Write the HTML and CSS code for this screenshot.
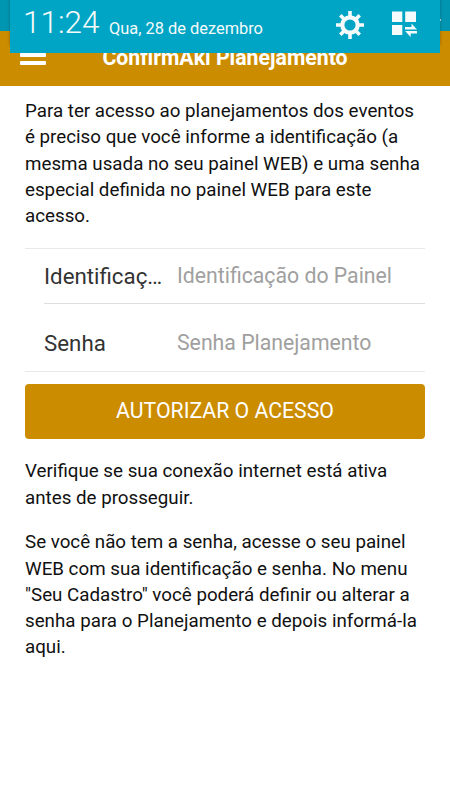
FILE: index.html
```
<!DOCTYPE html>
<html lang="pt-BR">
<head>
  <meta charset="UTF-8">
  <meta name="viewport" content="width=device-width, initial-scale=1.0">
  <title>ConfirmAki Planejamento</title>
  <link rel="stylesheet" href="styles.css">
</head>
<body>

  <div class="statusbar"><span class="status-dot"></span></div>

  <!-- Notification shade over the top of the app -->
  <div class="shade">
    <span class="clock">11:24</span>
    <span class="date">Qua, 28 de dezembro</span>
    <svg class="gear" viewBox="0 0 28 28" width="28" height="28">
      <circle cx="14" cy="14" r="7.7" fill="none" stroke="#f5fafb" stroke-width="4.2"/>
      <g stroke="#f5fafb" stroke-width="3.6">
        <path d="M14 0v5M14 23v5M0 14h5M23 14h5"/>
        <path d="M4.3 4.3l4 4M19.7 19.7l4 4M4.3 23.7l4-4M19.7 8.3l4-4"/>
      </g>
    </svg>
    <svg class="toggles" viewBox="0 0 26 26" width="26" height="26">
      <g fill="#f5fafb">
        <path d="M0 0.5h10.3v10.5H0zM13.2 0.5H24v10.5H13.2zM0 14h10.3v10H0z"/>
        <path d="M13 18.5h12L19.5 12.6v3.4H13zM25 20H13l5.7 6v-3.6H25z"/>
      </g>
    </svg>
  </div>

  <div class="navbar">
    <button class="menu" aria-label="Menu"><span></span><span></span><span></span></button>
    <h1 class="title">ConfirmAki Planejamento</h1>
  </div>

  <div class="content">
    <p>Para ter acesso ao planejamentos dos eventos é preciso que você informe a identificação (a mesma usada no seu painel WEB) e uma senha especial definida no painel WEB para este acesso.</p>

    <form class="login">
      <div class="fields">
        <div class="field">
          <label class="label" for="ident">Identificação</label>
          <input id="ident" type="text" placeholder="Identificação do Painel">
        </div>
        <div class="field">
          <label class="label" for="senha">Senha</label>
          <input id="senha" type="password" placeholder="Senha Planejamento">
        </div>
      </div>
      <button type="button" class="submit">AUTORIZAR O ACESSO</button>
    </form>

    <p>Verifique se sua conexão internet está ativa antes de prosseguir.</p>
    <p>Se você não tem a senha, acesse o seu painel WEB com sua identificação e senha. No menu "Seu Cadastro" você poderá definir ou alterar a senha para o Planejamento e depois informá-la aqui.</p>
  </div>

</body>
</html>
```

FILE: styles.css
```
* {
  margin: 0;
  padding: 0;
  box-sizing: border-box;
}

body {
  font-family: Roboto, sans-serif;
  font-size: 18.75px;
  line-height: 26.25px;
  color: #111;
  background-color: #fff;
  overflow: hidden;
}

.statusbar {
  display: flex;
  justify-content: flex-end;
  height: 31px;
  background-color: #0096b2;
}

.status-dot {
  width: 1px;
  height: 2px;
  margin: 19px 9px 0 0;
  background-color: #b5dde6;
}

.shade {
  position: absolute;
  top: 0;
  left: 10px;
  right: 10px;
  height: 53px;
  display: flex;
  align-items: flex-start;
  padding-left: 13px;
  background-color: #00a5c5;
  box-shadow: 0 -8px 3px rgba(0, 0, 0, 0.3);
  color: #f5fafb;
  white-space: nowrap;
}

.clock {
  width: 86px;
  font-size: 31.5px;
  font-weight: 300;
  line-height: 46px;
}

.date {
  width: 227px;
  font-size: 16.4px;
  line-height: 57px;
}

.gear {
  margin-top: 11px;
}

.toggles {
  margin: 11px 0 0 28px;
}

.navbar {
  display: flex;
  align-items: center;
  height: 55px;
  padding: 0 20px;
  background-color: #cc8c00;
  color: #fff;
}

.menu {
  display: flex;
  flex-direction: column;
  gap: 4px;
  width: 26px;
  margin-bottom: 8px;
  border: none;
  background: none;
}

.menu span {
  height: 4px;
  border-radius: 1px;
  background-color: #fff;
}

.title {
  flex: 1;
  padding-right: 26px;
  text-align: center;
  font-size: 21.25px;
  font-weight: 700;
}

.content {
  padding: 12px 25px;
}

.content p + p {
  margin-top: 18.5px;
}

.login {
  margin: 19px 0;
}

.fields {
  border-top: 1px solid #e9e9e9;
  border-bottom: 1px solid #e9e9e9;
}

.field {
  display: flex;
  align-items: center;
  height: 54px;
  margin-left: 19px;
}

.field + .field {
  height: 68px;
  padding-top: 11px;
  border-top: 1px solid #ddd;
}

.label {
  width: 119px;
  margin-right: 14px;
  font-size: 22.3px;
  color: #333;
  white-space: nowrap;
  overflow: hidden;
  text-overflow: ellipsis;
}

.field input {
  flex: 1;
  min-width: 0;
  border: none;
  background: none;
  font: inherit;
  font-size: 21.25px;
}

.field input::placeholder {
  color: #a0a0a0;
}

.submit {
  display: block;
  width: 100%;
  height: 55px;
  margin-top: 12px;
  padding-bottom: 2px;
  border: none;
  border-radius: 4px;
  background-color: #cc8c00;
  color: #fff;
  font: inherit;
  font-size: 21.25px;
}
```
